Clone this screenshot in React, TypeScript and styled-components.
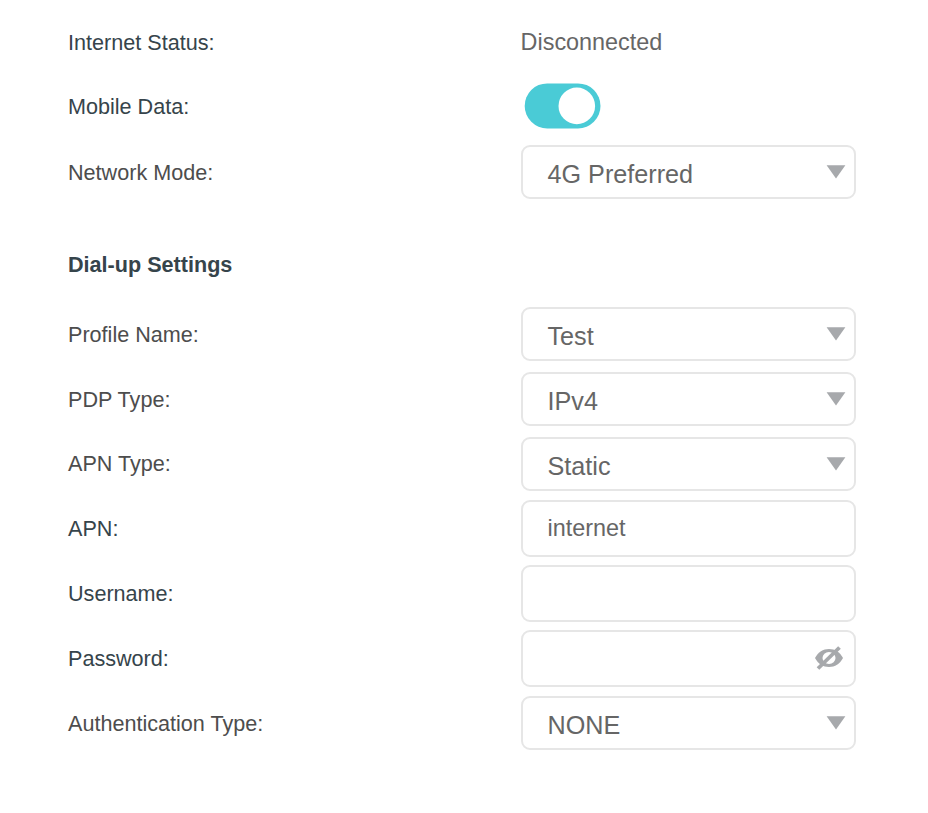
import React, { useState } from "react";
import styled, { createGlobalStyle } from "styled-components";

const GlobalStyle = createGlobalStyle`
  body {
    margin: 0;
    background: #fff;
    font-family: "Liberation Sans", Arial, sans-serif;
  }
  *, *::before, *::after { box-sizing: border-box; }
`;

const Form = styled.form`
  display: flex;
  flex-direction: column;
  width: 928px;
  height: 813px;
  padding: 10px 72px 0 68px;
  background: #fff;
`;

const Row = styled.div<{ $height: number }>`
  display: grid;
  grid-template-columns: 453px 335px;
  align-items: center;
  flex: none;
  height: ${(p) => p.$height}px;
`;

const Label = styled.label<{ $muted?: boolean; $flush?: boolean }>`
  margin-top: ${(p) => (p.$flush ? 0 : 2)}px;
  font-size: 21.6px;
  line-height: 26px;
  color: ${(p) => (p.$muted ? "#4d4d4d" : "#36444b")};
  white-space: nowrap;
`;

const Heading = styled.h2`
  flex: none;
  height: 96px;
  margin: 0;
  padding-top: 46px;
  font-size: 21.6px;
  line-height: 26px;
  font-weight: 700;
  color: #36444b;
`;

const Status = styled.span`
  margin-left: -0.4px;
  font-size: 23.4px;
  line-height: 28px;
  color: #666;
`;

const Switch = styled.svg`
  margin-left: 3px;
`;

const Field = styled.div<{ $tall?: boolean }>`
  display: flex;
  align-items: center;
  justify-content: space-between;
  width: 335px;
  height: ${(p) => (p.$tall ? 57 : 54)}px;
  padding: 0 8px 0 24.5px;
  border: 2px solid #e6e6e6;
  border-radius: 9px;
  background: #fff;
`;

const Selected = styled.span`
  padding-top: 4px;
  font-size: 25.2px;
  line-height: 30px;
  color: #666;
`;

const Input = styled.input`
  flex: 1;
  min-width: 0;
  height: 30px;
  padding: 0;
  border: 0;
  outline: 0;
  background: transparent;
  font: 23.4px "Liberation Sans", Arial, sans-serif;
  color: #666;
`;

const Arrow = styled.svg`
  flex: none;
`;

const Eye = styled.svg`
  flex: none;
  margin-right: 2px;
`;

function Toggle() {
  return (
    <Switch width="78" height="46" viewBox="0 0 78 46" role="switch" aria-checked="true">
      <rect x="0.7" y="0.4" width="75.8" height="45" rx="22.5" fill="#4acbd6" />
      <circle cx="52.8" cy="22.9" r="18.3" fill="#fff" />
    </Switch>
  );
}

function Select({ value }: { value: string }) {
  return (
    <Field>
      <Selected>{value}</Selected>
      <Arrow width="20" height="14" viewBox="0 0 20 14">
        <path d="M0.6 0.2H19.4L10 13.5Z" fill="#a7a9ac" />
      </Arrow>
    </Field>
  );
}

function HiddenEye() {
  return (
    <Eye width="30" height="24" viewBox="0 0 30 24">
      <path
        d="M1 12C4.2 6 9 3 15 3S25.8 6 29 12C25.8 18 21 21 15 21S4.2 18 1 12Z"
        fill="#a7a9ac"
      />
      <ellipse cx="15" cy="12" rx="6.5" ry="6" fill="#fff" />
      <path d="M4 22.5 25.5 1.5" stroke="#a7a9ac" strokeWidth="3.8" />
    </Eye>
  );
}

export default function App() {
  const [apn, setApn] = useState("internet");
  const [user, setUser] = useState("");
  const [password, setPassword] = useState("");

  return (
    <>
      <GlobalStyle />
      <Form>
        <Row $height={64}>
          <Label>Internet Status:</Label>
          <Status>Disconnected</Status>
        </Row>
        <Row $height={64}>
          <Label>Mobile Data:</Label>
          <Toggle />
        </Row>
        <Row $height={68}>
          <Label $muted>Network Mode:</Label>
          <Select value="4G Preferred" />
        </Row>
        <Heading>Dial-up Settings</Heading>
        <Row $height={64}>
          <Label $muted>Profile Name:</Label>
          <Select value="Test" />
        </Row>
        <Row $height={66}>
          <Label $muted>PDP Type:</Label>
          <Select value="IPv4" />
        </Row>
        <Row $height={64}>
          <Label $muted $flush>APN Type:</Label>
          <Select value="Static" />
        </Row>
        <Row $height={65}>
          <Label $flush>APN:</Label>
          <Field $tall>
            <Input value={apn} onChange={(e) => setApn(e.target.value)} />
          </Field>
        </Row>
        <Row $height={65}>
          <Label $flush>Username:</Label>
          <Field $tall>
            <Input value={user} onChange={(e) => setUser(e.target.value)} />
          </Field>
        </Row>
        <Row $height={64}>
          <Label>Password:</Label>
          <Field $tall>
            <Input
              type="password"
              value={password}
              onChange={(e) => setPassword(e.target.value)}
            />
            <HiddenEye />
          </Field>
        </Row>
        <Row $height={66}>
          <Label $muted>Authentication Type:</Label>
          <Select value="NONE" />
        </Row>
      </Form>
    </>
  );
}
